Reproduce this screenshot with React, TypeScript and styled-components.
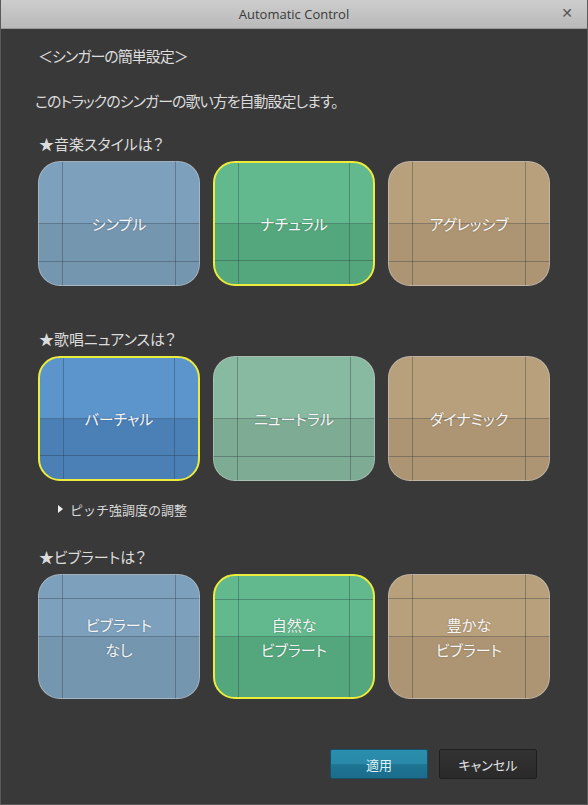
import React from "react";
import styled, { createGlobalStyle, css } from "styled-components";

const Global = createGlobalStyle`
  html, body { margin: 0; padding: 0; background: #3a3a3a; }
  body { font-family: "Noto Sans CJK JP", "Noto Sans", sans-serif; }
`;

const Window = styled.div`
  width: 588px;
  height: 805px;
  box-sizing: border-box;
  border: 1px solid #5a5a5a;
  border-top: none;
  background: #393939;
  display: flex;
  flex-direction: column;
`;

const TitleBar = styled.div`
  height: 28px;
  flex: none;
  background: linear-gradient(#cdcdcd, #b9b9b9);
  border-bottom: 1px solid #9a9a9a;
  display: flex;
  align-items: center;
  justify-content: center;
  position: relative;
  color: #3a3a3a;
  font-family: "Open Sans", "Noto Sans", sans-serif;
  font-size: 13px;
`;

const Close = styled.span`
  position: absolute;
  right: 14px;
  top: 5px;
  font-size: 14px;
  color: #555;
  font-family: "DejaVu Sans", sans-serif;
`;

const Body = styled.div`
  flex: 1;
  display: flex;
  flex-direction: column;
  padding: 17px 0 0 37px;
  color: #dcdcdc;
  font-feature-settings: "palt";
`;

const Line = styled.div<{ $mt: number; $ml?: number; $size?: number; $ls?: number }>`
  margin-top: ${(p) => p.$mt}px;
  margin-left: ${(p) => p.$ml ?? 0}px;
  height: 20px;
  line-height: 20px;
  font-size: ${(p) => p.$size ?? 15}px;
  letter-spacing: ${(p) => p.$ls ?? 0}px;
  white-space: nowrap;
`;

const Row = styled.div<{ $mt: number }>`
  display: flex;
  gap: 13px;
  margin-top: ${(p) => p.$mt}px;
`;

type Kind = "blue" | "green" | "tan" | "blueSel" | "mint";

const palette: Record<Kind, [string, string]> = {
  blue: ["#7da0bc", "#7596af"],
  green: ["#63b98e", "#54a77d"],
  tan: ["#b9a07c", "#ad9573"],
  blueSel: ["#5c94cc", "#4b80b7"],
  mint: ["#88b9a1", "#7eab94"],
};

const lineColor = "rgba(40,50,60,0.35)";

const Tile = styled.div<{ $kind: Kind; $sel?: boolean; $upper?: boolean }>`
  width: 162px;
  height: 125px;
  box-sizing: border-box;
  border-radius: 22px;
  border: ${(p) => (p.$sel ? "2px solid #ecec3c" : "1px solid rgba(200,200,200,0.55)")};
  display: flex;
  align-items: center;
  justify-content: center;
  text-align: center;
  color: #f6f6f6;
  font-size: 15px;
  line-height: 25px;
  text-shadow: 0 0 2px rgba(0, 0, 0, 0.25);
  ${(p) => {
    const [a, b] = palette[p.$kind];
    const hLines = p.$upper
      ? css`
          linear-gradient(to bottom, transparent 23px, ${lineColor} 23px, ${lineColor} 24px, transparent 24px),
          linear-gradient(to bottom, transparent calc(50% - 0.5px), ${lineColor} calc(50% - 0.5px), ${lineColor} calc(50% + 0.5px), transparent calc(50% + 0.5px)),
        `
      : css`
          linear-gradient(to bottom, transparent calc(50% - 0.5px), ${lineColor} calc(50% - 0.5px), ${lineColor} calc(50% + 0.5px), transparent calc(50% + 0.5px)),
          linear-gradient(to top, transparent 23px, ${lineColor} 23px, ${lineColor} 24px, transparent 24px),
        `;
    return css`
      background: ${hLines}
        linear-gradient(to right, transparent 23px, ${lineColor} 23px, ${lineColor} 24px, transparent 24px),
        linear-gradient(to left, transparent 23px, ${lineColor} 23px, ${lineColor} 24px, transparent 24px),
        linear-gradient(to bottom, ${a} 50%, ${b} 50%);
    `;
  }}
`;

const Pitch = styled.div`
  margin-top: 18px;
  margin-left: 20px;
  height: 20px;
  display: flex;
  align-items: center;
  gap: 7px;
  font-size: 13px;
  font-feature-settings: normal;
  color: #d8d8d8;
`;

const Tri = styled.span`
  width: 0;
  height: 0;
  border-top: 4px solid transparent;
  border-bottom: 4px solid transparent;
  border-left: 5px solid #f0f0f0;
`;

const Buttons = styled.div`
  margin-top: 50px;
  margin-right: 50px;
  display: flex;
  justify-content: flex-end;
  gap: 11px;
`;

const Btn = styled.button<{ $primary?: boolean }>`
  width: 98px;
  height: 30px;
  border-radius: 2px;
  font-family: "Noto Sans CJK JP", sans-serif;
  font-size: 13px;
  font-feature-settings: "palt";
  cursor: pointer;
  ${(p) =>
    p.$primary
      ? css`
          background: linear-gradient(#2a8eae 0%, #2a88a7 50%, #1e7493 52%, #1b6d8b 100%);
          border: 1px solid #16506a;
          color: #dff2f8;
        `
      : css`
          background: linear-gradient(#323232, #2a2a2a);
          border: 1px solid #1f1f1f;
          color: #e4e4e4;
        `}
`;

export default function App() {
  return (
    <>
      <Global />
      <Window>
        <TitleBar>
          Automatic Control
          <Close>✕</Close>
        </TitleBar>
        <Body>
          <Line $mt={0} $ls={-1}>＜シンガーの簡単設定＞</Line>
          <Line $mt={25} $ml={-3} $ls={-1}>このトラックのシンガーの歌い方を自動設定します。</Line>
          <Line $mt={23} $ml={1}>★音楽スタイルは？</Line>
          <Row $mt={7}>
            <Tile $kind="blue">シンプル</Tile>
            <Tile $kind="green" $sel>ナチュラル</Tile>
            <Tile $kind="tan">アグレッシブ</Tile>
          </Row>
          <Line $mt={43} $ml={1}>★歌唱ニュアンスは？</Line>
          <Row $mt={7}>
            <Tile $kind="blueSel" $sel>バーチャル</Tile>
            <Tile $kind="mint">ニュートラル</Tile>
            <Tile $kind="tan">ダイナミック</Tile>
          </Row>
          <Pitch>
            <Tri />
            ピッチ強調度の調整
          </Pitch>
          <Line $mt={28} $ml={1}>★ビブラートは？</Line>
          <Row $mt={7}>
            <Tile $kind="blue" $upper>ビブラート<br />なし</Tile>
            <Tile $kind="green" $sel $upper>自然な<br />ビブラート</Tile>
            <Tile $kind="tan" $upper>豊かな<br />ビブラート</Tile>
          </Row>
          <Buttons>
            <Btn $primary>適用</Btn>
            <Btn>キャンセル</Btn>
          </Buttons>
        </Body>
      </Window>
    </>
  );
}
